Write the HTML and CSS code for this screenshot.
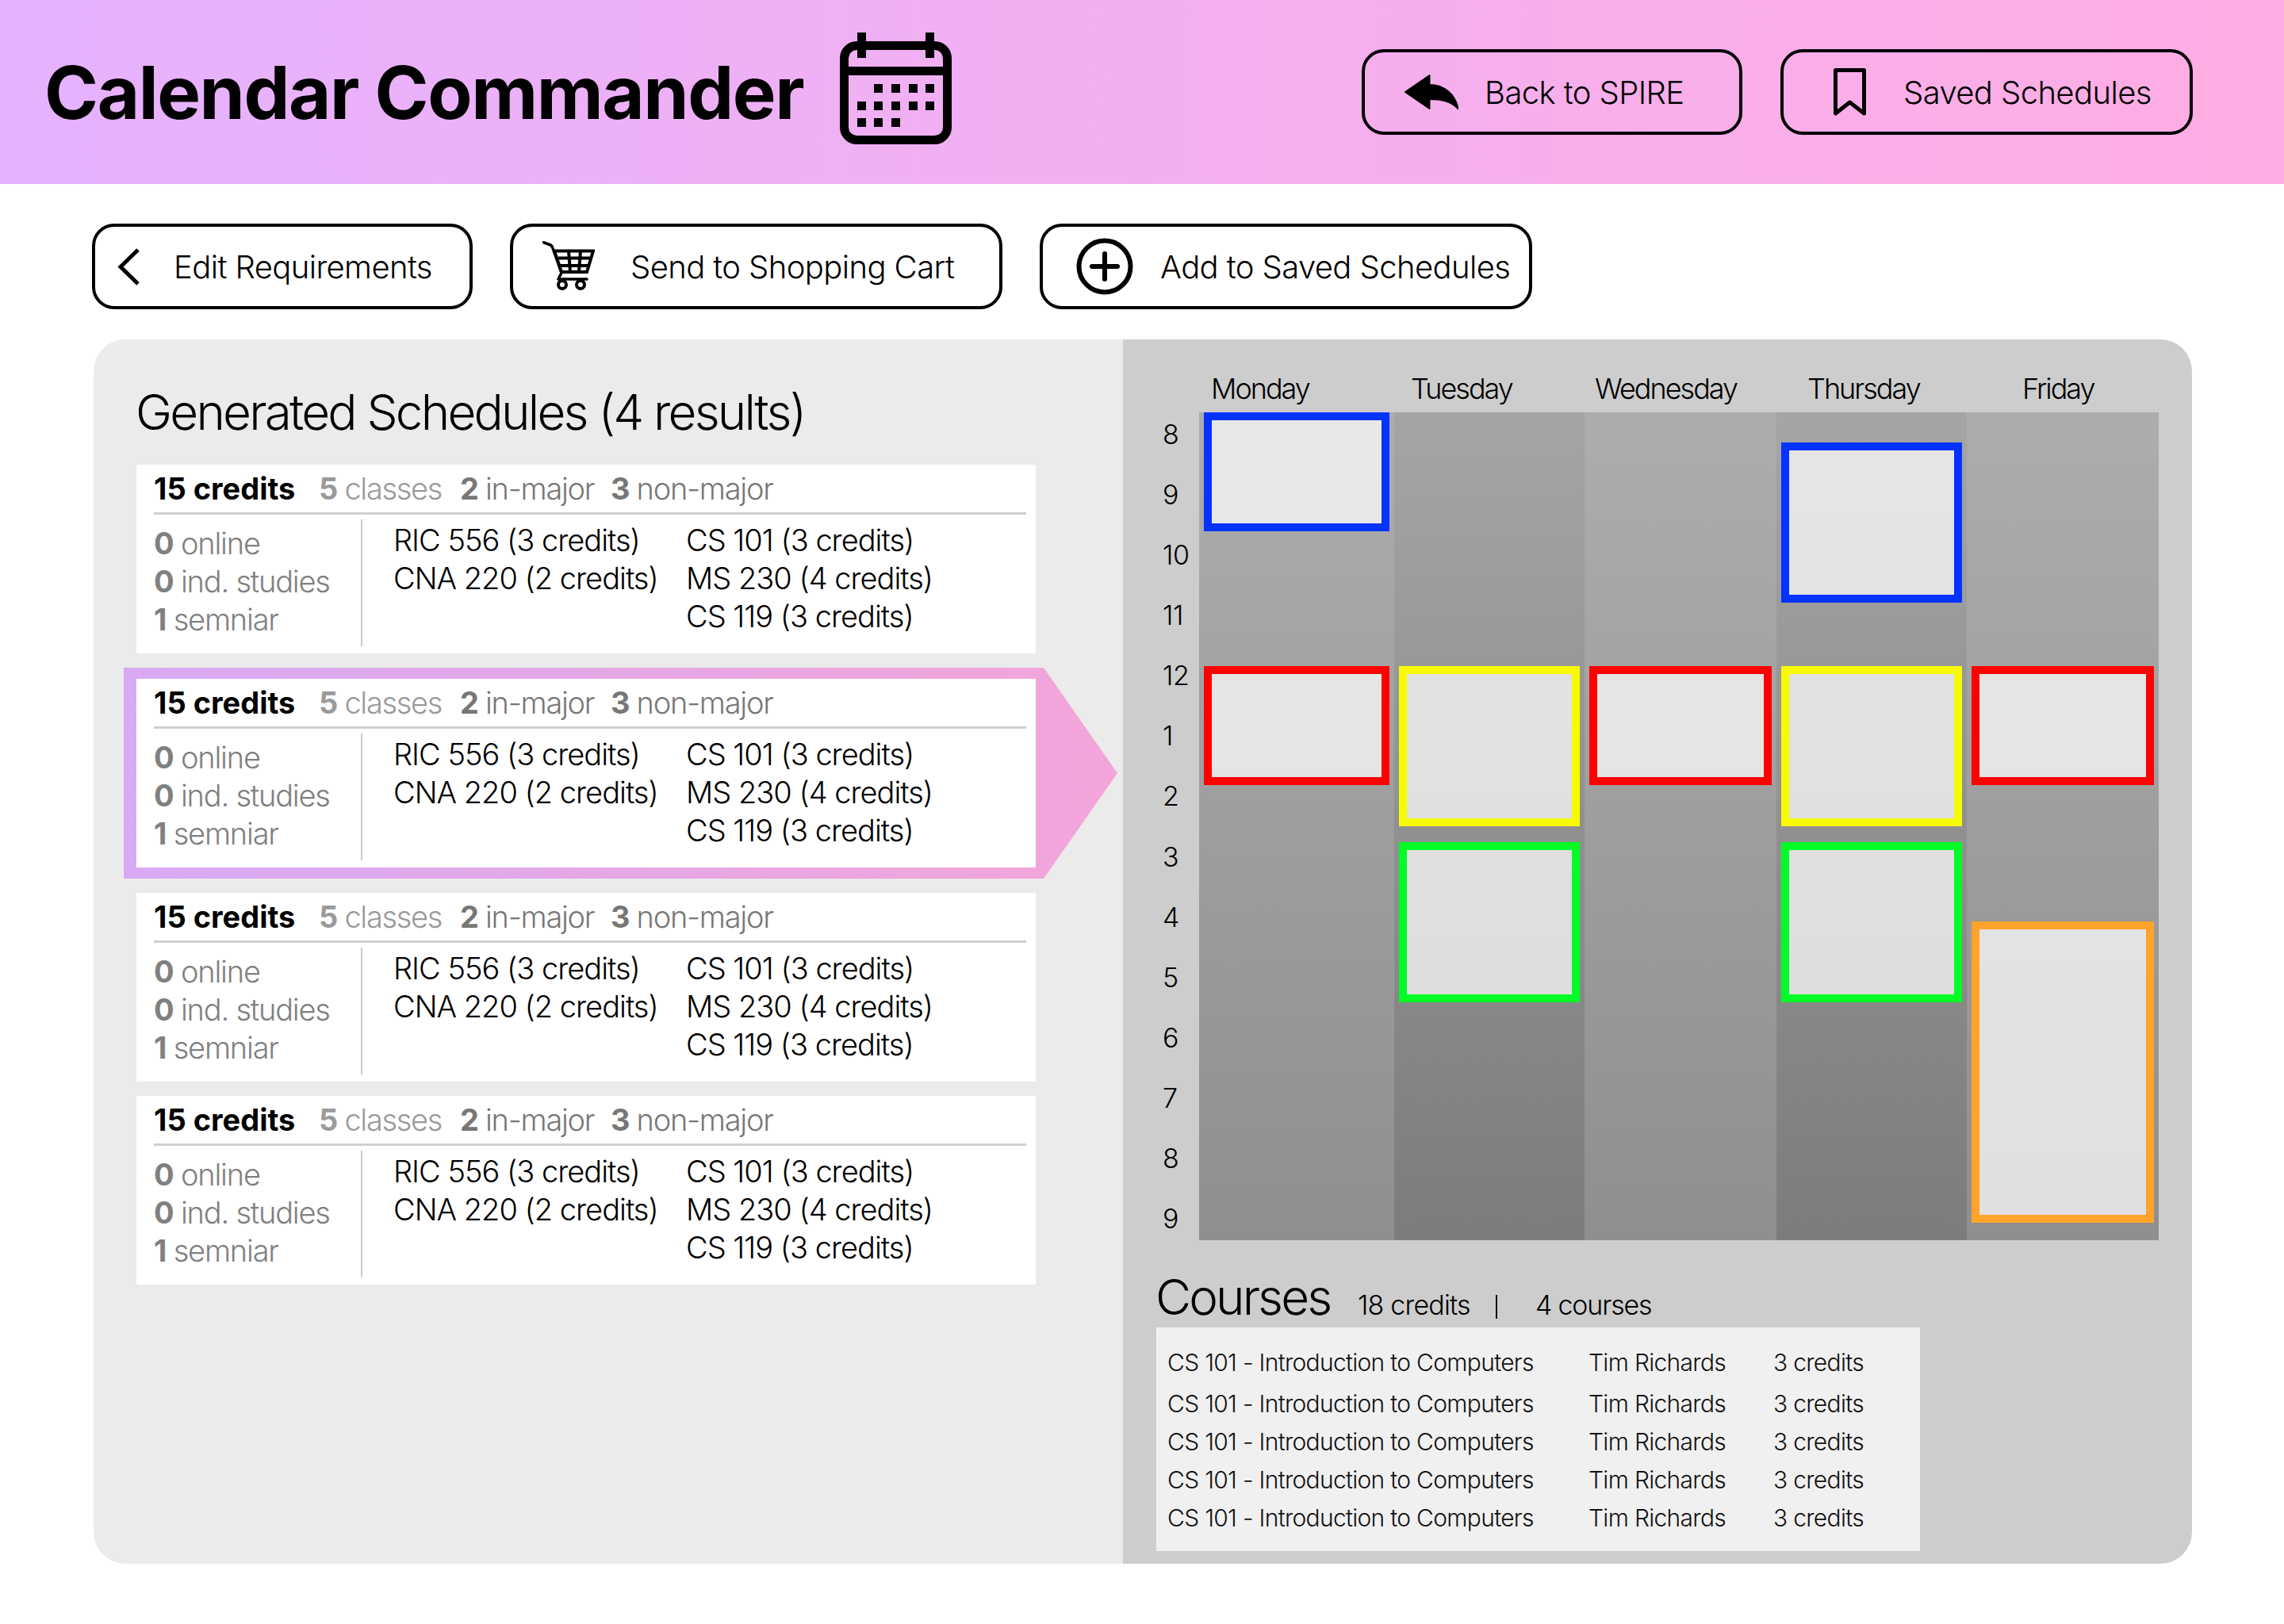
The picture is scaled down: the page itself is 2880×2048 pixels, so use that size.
FILE: index.html
```html
<!DOCTYPE html>
<html lang="en">
<head>
<meta charset="utf-8">
<title>Calendar Commander</title>
<link rel="stylesheet" href="styles.css">
</head>
<body>
<header class="topbar">
  <div class="brand">
    <h1 class="brand-title">Calendar Commander</h1>
    <svg class="brand-icon" viewBox="0 0 141 141" aria-hidden="true">
      <rect x="5.5" y="16.5" width="130" height="119" rx="16" fill="none" stroke="#000" stroke-width="11"/>
      <rect x="0" y="43" width="141" height="11"/>
      <rect x="22" y="0" width="11" height="32"/><rect x="108" y="0" width="11" height="32"/>
      <rect x="43" y="65" width="11" height="11"/><rect x="65" y="65" width="11" height="11"/><rect x="87" y="65" width="11" height="11"/><rect x="108" y="65" width="11" height="11"/>
      <rect x="22" y="87" width="11" height="11"/><rect x="43" y="87" width="11" height="11"/><rect x="65" y="87" width="11" height="11"/><rect x="87" y="87" width="11" height="11"/><rect x="108" y="87" width="11" height="11"/>
      <rect x="22" y="108" width="11" height="11"/><rect x="43" y="108" width="11" height="11"/><rect x="65" y="108" width="11" height="11"/>
    </svg>
  </div>
  <nav class="top-actions">
    <a class="btn btn-spire">
      <svg class="ic-back" viewBox="0 0 68 44" aria-hidden="true"><path d="M1 22 L31.500 1 V13 C50 13 64 25 67.500 43 C60 35 50 31 31.500 31 V43 Z" stroke="#000" stroke-width="2" stroke-linejoin="round"/></svg>
      <span>Back to SPIRE</span>
    </a>
    <a class="btn btn-saved">
      <svg class="ic-mark" viewBox="0 0 41 60" aria-hidden="true"><path d="M2.500 2.500 H38.500 V57 L20.500 43 L2.500 57 Z" fill="none" stroke="#000" stroke-width="5" stroke-linejoin="round"/></svg>
      <span>Saved Schedules</span>
    </a>
  </nav>
</header>

<div class="toolbar">
  <a class="btn btn-edit">
    <svg class="ic-chev" viewBox="0 0 29 49" aria-hidden="true"><path d="M26 3 L4 24.500 L26 46" fill="none" stroke="#000" stroke-width="5"/></svg>
    <span>Edit Requirements</span>
  </a>
  <a class="btn btn-cart">
    <svg class="ic-cart" viewBox="0 0 66 64" aria-hidden="true">
      <path d="M1 1.500 L9 4.500 Q12 5.500 13 9 L24 40 L20 48 H56" fill="none" stroke="#000" stroke-width="3.500" stroke-linecap="round" stroke-linejoin="round"/>
      <path d="M15 12.500 H64 L56 39 H24 Z M20 21.500 H61 M22 31 H59 M33 12 L35 39 M48 12 L46 39" fill="none" stroke="#000" stroke-width="4"/>
      <circle cx="25" cy="55" r="5" fill="none" stroke="#000" stroke-width="4"/><circle cx="48" cy="55" r="5" fill="none" stroke="#000" stroke-width="4"/>
    </svg>
    <span>Send to Shopping Cart</span>
  </a>
  <a class="btn btn-add">
    <svg class="ic-plus" viewBox="0 0 72 72" aria-hidden="true"><circle cx="36" cy="36" r="32.500" fill="none" stroke="#000" stroke-width="6"/><path d="M20 36 H52 M36 20 V52" stroke="#000" stroke-width="6" stroke-linecap="round"/></svg>
    <span>Add to Saved Schedules</span>
  </a>
</div>

<main class="panel">
  <section class="results">
    <h2 class="results-title">Generated Schedules (4 results)</h2>
    <div class="result-list">
      <article class="card">
        <div class="card-head"><span class="credits">15 credits</span><span class="m-light"><b>5</b> classes</span><span class="m-dark"><b>2</b> in-major</span><span class="m-dark"><b>3</b> non-major</span></div>
        <div class="card-body">
          <div class="stats"><div><b>0</b> online</div><div><b>0</b> ind. studies</div><div><b>1</b> semniar</div></div>
          <div class="courses-a"><div>RIC 556 (3 credits)</div><div>CNA 220 (2 credits)</div></div>
          <div class="courses-b"><div>CS 101 (3 credits)</div><div>MS 230 (4 credits)</div><div>CS 119 (3 credits)</div></div>
        </div>
      </article>
      <div class="selected">
        <article class="card">
          <div class="card-head"><span class="credits">15 credits</span><span class="m-light"><b>5</b> classes</span><span class="m-dark"><b>2</b> in-major</span><span class="m-dark"><b>3</b> non-major</span></div>
          <div class="card-body">
            <div class="stats"><div><b>0</b> online</div><div><b>0</b> ind. studies</div><div><b>1</b> semniar</div></div>
            <div class="courses-a"><div>RIC 556 (3 credits)</div><div>CNA 220 (2 credits)</div></div>
            <div class="courses-b"><div>CS 101 (3 credits)</div><div>MS 230 (4 credits)</div><div>CS 119 (3 credits)</div></div>
          </div>
        </article>
      </div>
      <article class="card">
        <div class="card-head"><span class="credits">15 credits</span><span class="m-light"><b>5</b> classes</span><span class="m-dark"><b>2</b> in-major</span><span class="m-dark"><b>3</b> non-major</span></div>
        <div class="card-body">
          <div class="stats"><div><b>0</b> online</div><div><b>0</b> ind. studies</div><div><b>1</b> semniar</div></div>
          <div class="courses-a"><div>RIC 556 (3 credits)</div><div>CNA 220 (2 credits)</div></div>
          <div class="courses-b"><div>CS 101 (3 credits)</div><div>MS 230 (4 credits)</div><div>CS 119 (3 credits)</div></div>
        </div>
      </article>
      <article class="card">
        <div class="card-head"><span class="credits">15 credits</span><span class="m-light"><b>5</b> classes</span><span class="m-dark"><b>2</b> in-major</span><span class="m-dark"><b>3</b> non-major</span></div>
        <div class="card-body">
          <div class="stats"><div><b>0</b> online</div><div><b>0</b> ind. studies</div><div><b>1</b> semniar</div></div>
          <div class="courses-a"><div>RIC 556 (3 credits)</div><div>CNA 220 (2 credits)</div></div>
          <div class="courses-b"><div>CS 101 (3 credits)</div><div>MS 230 (4 credits)</div><div>CS 119 (3 credits)</div></div>
        </div>
      </article>
    </div>
  </section>

  <section class="detail">
    <div class="days"><span>Monday</span><span>Tuesday</span><span>Wednesday</span><span>Thursday</span><span>Friday</span></div>
    <div class="calendar">
      <div class="hours"><span>8</span><span>9</span><span>10</span><span>11</span><span>12</span><span>1</span><span>2</span><span>3</span><span>4</span><span>5</span><span>6</span><span>7</span><span>8</span><span>9</span></div>
      <div class="week">
        <div class="day day-odd">
          <div class="event ev-blue" style="top:0;height:150px"></div>
          <div class="event ev-red" style="top:320px;height:150px"></div>
        </div>
        <div class="day day-even">
          <div class="event ev-yellow" style="top:320px;height:202px"></div>
          <div class="event ev-green" style="top:542px;height:202px"></div>
        </div>
        <div class="day day-odd">
          <div class="event ev-red" style="top:320px;height:150px"></div>
        </div>
        <div class="day day-even">
          <div class="event ev-blue" style="top:38px;height:202px"></div>
          <div class="event ev-yellow" style="top:320px;height:202px"></div>
          <div class="event ev-green" style="top:542px;height:202px"></div>
        </div>
        <div class="day day-odd">
          <div class="event ev-red" style="top:320px;height:150px"></div>
          <div class="event ev-orange" style="top:642px;height:380px"></div>
        </div>
      </div>
    </div>
    <div class="courses-head">
      <h2 class="courses-title">Courses</h2>
      <span class="courses-credits">18 credits</span>
      <span class="courses-sep"></span>
      <span class="courses-count">4 courses</span>
    </div>
    <div class="course-table">
      <div class="course-row"><span>CS 101 - Introduction to Computers</span><span>Tim Richards</span><span>3 credits</span></div>
      <div class="course-row"><span>CS 101 - Introduction to Computers</span><span>Tim Richards</span><span>3 credits</span></div>
      <div class="course-row"><span>CS 101 - Introduction to Computers</span><span>Tim Richards</span><span>3 credits</span></div>
      <div class="course-row"><span>CS 101 - Introduction to Computers</span><span>Tim Richards</span><span>3 credits</span></div>
      <div class="course-row"><span>CS 101 - Introduction to Computers</span><span>Tim Richards</span><span>3 credits</span></div>
    </div>
  </section>
</main>
</body>
</html>
```

FILE: styles.css
```css
* { box-sizing: border-box; }
html, body { margin: 0; padding: 0; }
body {
  width: 2880px;
  height: 2048px;
  background: #fff;
  color: #000;
  font-family: Inter, "Liberation Sans", sans-serif;
  font-weight: 300;
  overflow: hidden;
}

.topbar {
  height: 232px;
  display: flex;
  align-items: flex-start;
  justify-content: space-between;
  padding: 41px 115px 0 56px;
  background: linear-gradient(90deg, #e6b2fe 0%, #ffade3 100%);
}
.brand { display: flex; align-items: flex-start; }
.brand-title {
  margin: 26px 0 0;
  width: 1003px;
  font-size: 92px;
  line-height: 100px;
  font-weight: 700;
  letter-spacing: -1.4px;
  white-space: nowrap;
}
.brand-icon { width: 141px; height: 141px; display: block; }

.top-actions { display: flex; gap: 48px; margin-top: 21px; }
.toolbar { display: flex; gap: 47px; padding: 50px 0 0 116px; }

.btn {
  height: 108px;
  display: flex;
  align-items: center;
  border: 4px solid #000;
  border-radius: 28px;
  font-size: 40px;
  letter-spacing: -0.6px;
  white-space: nowrap;
}
.btn span { display: block; }
.btn svg { display: block; flex: none; }

.btn-spire { width: 480px; padding-left: 50px; }
.ic-back { width: 68px; height: 44px; margin-right: 33px; }
.btn-saved { width: 520px; padding-left: 63px; }
.ic-mark { width: 41px; height: 60px; margin-right: 47px; }
.btn-edit { width: 480px; padding-left: 28px; }
.ic-chev { width: 29px; height: 49px; margin-right: 42px; }
.btn-cart { width: 621px; padding-left: 37px; }
.ic-cart { width: 66px; height: 64px; margin-right: 45px; }
.btn-add { width: 621px; padding-left: 42px; }
.ic-plus { width: 72px; height: 72px; margin-right: 34px; }

.panel {
  display: flex;
  width: 2646px;
  height: 1544px;
  margin: 38px 0 0 118px;
  border-radius: 40px;
  overflow: hidden;
}
.results {
  width: 1298px;
  padding: 57px 0 0 54px;
  background: #ebebeb;
}
.results-title {
  margin: 0 0 31px -1px;
  font-size: 62px;
  line-height: 70px;
  font-weight: 300;
  letter-spacing: -2.8px;
  white-space: nowrap;
}
.result-list { display: flex; flex-direction: column; gap: 18px; }
.card {
  width: 1134px;
  height: 238px;
  padding: 0 12px 0 22px;
  background: #fff;
  font-size: 38px;
}
.card-head {
  display: grid;
  grid-template-columns: 208px 178px 190px auto;
  height: 63px;
  border-bottom: 3px solid #d0d0d0;
  line-height: 60px;
  letter-spacing: -1.3px;
  white-space: nowrap;
}
.card-head b { font-weight: 700; }
.credits { font-weight: 700; letter-spacing: 0; }
.m-light { color: #9a9a9a; }
.m-dark { color: #777; }
.card-body { display: flex; margin-top: 6px; height: 160px; letter-spacing: -1px; white-space: nowrap; }
.card-body > div > div { height: 48px; line-height: 48px; }
.stats { width: 263px; padding-top: 6px; border-right: 2px solid #ccc; color: #808080; letter-spacing: -1.2px; }
.stats b { font-weight: 700; }
.courses-a { width: 369px; margin-left: 39px; padding-top: 2px; }
.courses-b { padding-top: 2px; }
.selected {
  width: 1253px;
  margin-left: -16px;
  padding: 14px 0 14px 16px;
  background: linear-gradient(90deg, #d8aaf3 0%, #f3a5d9 100%);
  clip-path: polygon(0 0, 1160px 0, 100% 50%, 1160px 100%, 0 100%);
}

.detail {
  position: relative;
  flex: 1;
  padding: 42px 0 0 42px;
  background: #cdcdcd;
}
.days {
  display: grid;
  grid-template-columns: 252px 232px 268px 271px auto;
  height: 40px;
  margin-left: 69px;
  font-size: 36px;
  line-height: 40px;
  letter-spacing: -2px;
}
.calendar { display: flex; margin-top: 10px; }
.hours {
  width: 54px;
  height: 1044px;
  padding-left: 8px;
  font-size: 34px;
  letter-spacing: -0.3px;
}
.hours span { display: block; height: 76.08px; line-height: 76.08px; position: relative; top: -10px; }
.week {
  display: grid;
  grid-template-columns: 246px 240px 242px 240px 242px;
  height: 1044px;
}
.day { position: relative; }
.day-odd { background: linear-gradient(180deg, #adadad 0%, #8f8f8f 100%); }
.day-even { background: linear-gradient(180deg, #a5a5a5 0%, #7c7c7c 100%); }
.event {
  position: absolute;
  left: 6px;
  right: 6px;
  border: 10px solid;
  background: rgba(255, 255, 255, .72);
}
.ev-blue { border-color: #0433ff; }
.ev-red { border-color: #ff0000; }
.ev-yellow { border-color: #f8fb00; }
.ev-green { border-color: #00fd26; }
.ev-orange { border-color: #ffa32a; }

.courses-head {
  display: flex;
  align-items: baseline;
  height: 110px;
  padding-top: 37px;
  white-space: nowrap;
}
.courses-title {
  margin: 0 0 0 -1px;
  width: 255px;
  font-size: 62px;
  line-height: 70px;
  font-weight: 300;
  letter-spacing: -2.9px;
}
.courses-credits, .courses-count { font-size: 34px; letter-spacing: -0.8px; }
.courses-count { letter-spacing: -1.2px; }
.courses-credits { width: 174px; }
.courses-sep { width: 2px; height: 30px; background: #000; margin-right: 48px; transform: translateY(5px); }
.course-table {
  width: 963px;
  height: 282px;
  padding: 20px 0 0 14px;
  background: #f0f0f0;
  font-size: 30px;
  letter-spacing: -0.7px;
  color: #111;
}
.course-row {
  display: grid;
  grid-template-columns: 531px 233px auto;
  height: 48px;
  line-height: 48px;
  white-space: nowrap;
}
.course-row:first-child { margin-bottom: 4px; }
```
